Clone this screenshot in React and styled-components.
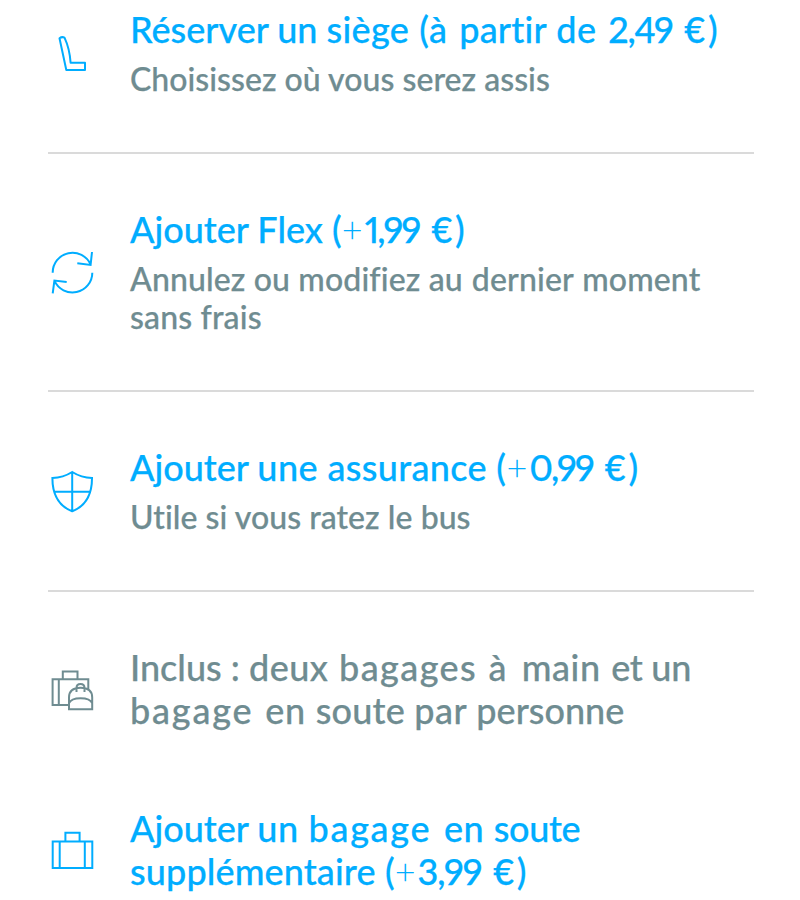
import styled, { createGlobalStyle } from "styled-components";

const GlobalStyle = createGlobalStyle`
    * {
        box-sizing: border-box;
    }

    body {
        margin: 0;
        background-color: #FFFFFF;
        overflow: hidden;
    }
`;

const Container = styled.main`
    width: 800px;
    height: 900px;
    padding: 0 46px 0 48px;
    overflow: hidden;
    font-family: Lato, "Liberation Sans", sans-serif;
    font-variant-ligatures: none;
    -webkit-text-stroke: 0.25px currentColor;
`;

/* The list is scrolled, so the first option starts above the top edge */
const List = styled.ul`
    list-style: none;
    margin: -46px 0 0;
    padding: 0;
`;

const Item = styled.li`
    display: flex;
    align-items: center;
    gap: 34px;
    padding: 54px 0 ${({ $divider }) => ($divider ? "54px" : "21px")};
    border-bottom: ${({ $divider }) => ($divider ? "2px solid #DADADA" : "none")};
    color: ${({ $included }) => ($included ? "#6F8C91" : "#00ADFF")};
`;

const Icon = styled.svg`
    width: 48px;
    height: 48px;
    flex-shrink: 0;
    fill: none;
    stroke: currentColor;
    stroke-width: 2;
`;

const Title = styled.h3`
    margin: 0;
    font-size: 36px;
    font-weight: 500;
    line-height: 43px;
`;

const Description = styled.p`
    margin: 9px 0 0;
    font-size: 32px;
    font-weight: 500;
    line-height: 38px;
    color: #6F8C91;
`;

const Line = styled.span`
    display: block;
    white-space: pre;
`;

const Part = styled.span`
    letter-spacing: ${({ $spacing }) => $spacing || 0}px;
    word-spacing: ${({ $gap }) => $gap || 0}px;
`;

const Plus = styled.span`
    margin-right: 2px;
    font-weight: 300;
    -webkit-text-stroke: 0;
`;

const Amount = styled.span`
    font-variant-numeric: proportional-nums;
    letter-spacing: ${({ $spacing }) => $spacing}px;
`;

const Currency = styled.span`
    letter-spacing: 2.8px;
`;

const SeatIcon = () => (
    <Icon viewBox="0 0 48 48">
        <path d="M11.5 9.3Q14 7.4 16.5 8.6C20 16 22 25 22.6 33.8H37V41H18.3Z" strokeLinejoin="round" />
    </Icon>
);

const FlexIcon = () => (
    <Icon viewBox="0 0 48 48">
        <path d="M4.7 24.7A19.8 19.8 0 0 1 42.6 16.5M44.3 24.7A19.8 19.8 0 0 1 6.4 32.7M29.3 15.2L42.6 16.9L44 4M18.7 34L6.4 32.6L4.7 45.3" />
    </Icon>
);

const ShieldIcon = () => (
    <Icon viewBox="0 0 48 48">
        <path d="M24.2 5C18.5 8.6 11.5 10.8 4.4 11C4.4 26 9.5 38.5 24.2 44.3C39 38.5 44 26 44 11C37 10.8 30 8.6 24.2 5ZM24.2 5V44.3M5.5 24.8H43" />
    </Icon>
);

const LuggageIcon = () => (
    <Icon viewBox="0 0 48 48">
        <path d="M21 40H4.6V14.3H40.3V24.5M10.8 14.3V40M14.8 14.3V6.6H29.5V14.3" />
        <path d="M21 44.2V32.5C21 26 25 22.8 32.6 22.8C40.2 22.8 44.2 26 44.2 32.5V44.2ZM21 38.2C22.5 34.5 26 33.2 32.6 33.2S42.7 34.5 44.2 38.2M28.5 27V23C28.5 17.8 36.5 17.8 36.5 23V27" />
    </Icon>
);

const SuitcaseIcon = () => (
    <Icon viewBox="0 0 48 48">
        <path d="M4.7 15.4H44.3V42H4.7ZM11.7 15.4V42M36.8 15.4V42M17.4 15.4V6.8H31.6V15.4" />
    </Icon>
);

/* Each line is a list of [text, letter spacing, word spacing] parts, with an optional price */
const options = [
    {
        icon: SeatIcon,
        title: [
            {
                parts: [["Réserver un "], ["siège ", 0.3, 0.8], ["(à ", 0.6, 2], ["partir ", 0.2, 0.8], ["de ", 0.6, 2]],
                price: { amount: "2,49", spacing: -1.4 },
            },
        ],
        description: [{ parts: [["Choisissez où vous serez assis", 0.03]] }],
        divider: true,
    },
    {
        icon: FlexIcon,
        title: [
            { parts: [["Ajouter Flex ("]], price: { plus: true, amount: "1,99", spacing: -1.7 } },
        ],
        description: [
            { parts: [["Annulez ou modifiez ", 0.14], ["au dernier moment", 0.14, 0.8]] },
            { parts: [["sans frais", 0.15]] },
        ],
        divider: true,
    },
    {
        icon: ShieldIcon,
        title: [
            {
                parts: [["Ajouter "], ["une ", 0.4], ["assurance (", 0.35]],
                price: { plus: true, amount: "0,99", spacing: -1.8 },
            },
        ],
        description: [{ parts: [["Utile si vous ratez le bus", 0.05]] }],
        divider: true,
    },
    {
        icon: LuggageIcon,
        title: [
            {
                parts: [
                    ["Inclus : "],
                    ["deux ", 0.5, 1],
                    ["bagages ", 1.4, 1],
                    ["à ", 1, 4],
                    ["main ", 0.6, 0.8],
                    ["et un", -0.3],
                ],
            },
            { parts: [["bagage ", 1.8, 1], ["en ", 0.7], ["soute ", 0.2], ["par ", 0.6], ["personne"]] },
        ],
        included: true,
    },
    {
        icon: SuitcaseIcon,
        title: [
            { parts: [["Ajouter "], ["un ", 0.6], ["bagage ", 1.7, 2], ["en ", 0.5], ["soute", -0.4]] },
            {
                parts: [["supplémentaire (", 0.12]],
                price: { plus: true, amount: "3,99", spacing: -1.1 },
            },
        ],
    },
];

const Price = ({ plus, amount, spacing }) => {
    return (
        <>
            {plus && <Plus>+</Plus>}
            <Amount $spacing={spacing}>{amount}</Amount>
            <Currency> €)</Currency>
        </>
    )
};

const TextLine = ({ parts, price }) => {
    return (
        <Line>
            {parts.map(([text, spacing, gap]) => (
                <Part key={text} $spacing={spacing} $gap={gap}>{text}</Part>
            ))}
            {price && <Price {...price} />}
        </Line>
    )
};

const Option = ({ icon: OptionIcon, title, description, divider, included }) => {
    return (
        <Item $divider={divider} $included={included}>
            <OptionIcon />

            <div>
                <Title>
                    {title.map((line, index) => <TextLine key={index} {...line} />)}
                </Title>

                {description && (
                    <Description>
                        {description.map((line, index) => <TextLine key={index} {...line} />)}
                    </Description>
                )}
            </div>
        </Item>
    )
};

const App = () => {
    return (
        <Container>
            <GlobalStyle />

            <List>
                {options.map((option, index) => <Option key={index} {...option} />)}
            </List>
        </Container>
    )
};

export default App;
